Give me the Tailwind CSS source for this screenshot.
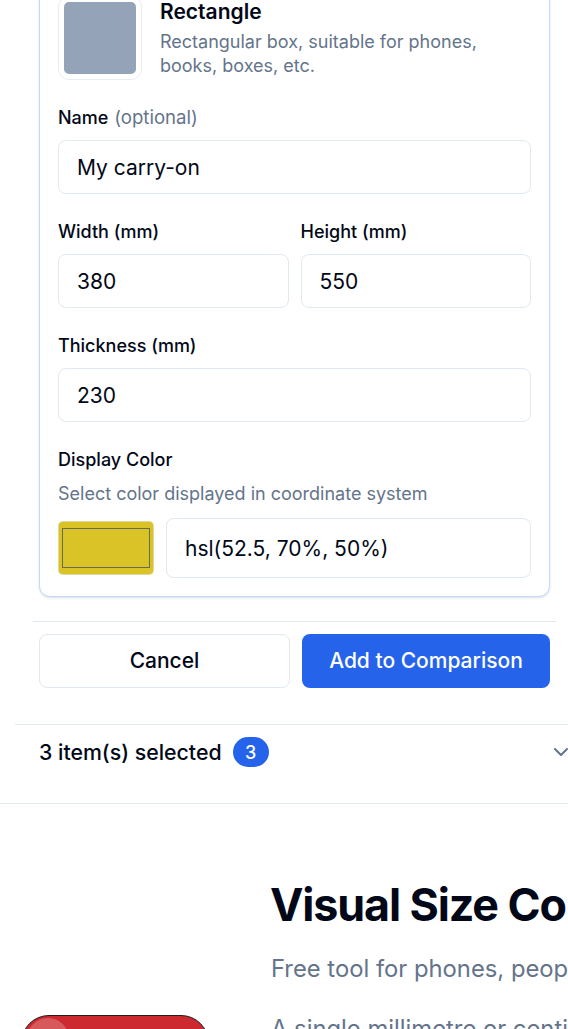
<!DOCTYPE html>
<html>
<head>
<meta charset="utf-8">
<script src="https://cdn.jsdelivr.net/npm/@tailwindcss/browser@4"></script>
</head>
<body class="bg-white">
<div class="w-[568px] h-[1029px] overflow-hidden font-['Inter',sans-serif] text-[#020817] bg-white">
  <div class="ml-[39px] w-[511px] h-[621px] -mt-[24px] pt-[19px] px-[18px] border border-[#bfdbfe] rounded-[11px] shadow-sm bg-white box-border">
    <div class="flex gap-[18px]">
      <div class="w-[84px] h-[84px] shrink-0 border border-[#e9edf2] rounded-[11px] p-[5px]">
        <div class="w-full h-full rounded-[5px] bg-[#94a3b8]"></div>
      </div>
      <div class="pt-[2px]">
        <div class="text-[21px] leading-[28px] font-semibold">Rectangle</div>
        <div class="mt-[4px] text-[18px] leading-[24px] text-[#64748b]">Rectangular box, suitable for phones, books, boxes, etc.</div>
      </div>
    </div>
    <div class="mt-[26px] flex flex-col gap-[10px]">
      <label class="text-[18px] h-[24px] leading-[24px] font-medium">Name <span class="ml-[1px] text-[18.6px] leading-none font-normal text-[#64748b]">(optional)</span></label>
      <input class="w-full h-[54px] px-[18px] border border-[#e2e8f0] rounded-[8px] text-[21px] bg-white" value="My carry-on">
    </div>
    <div class="mt-[26px] grid grid-cols-2 gap-[12px]">
      <div class="flex flex-col gap-[10px]">
        <label class="text-[18px] leading-[24px] font-medium">Width (mm)</label>
        <input class="w-full h-[54px] px-[18px] border border-[#e2e8f0] rounded-[8px] text-[21px] bg-white" value="380">
      </div>
      <div class="flex flex-col gap-[10px]">
        <label class="text-[18px] leading-[24px] font-medium">Height (mm)</label>
        <input class="w-full h-[54px] px-[18px] border border-[#e2e8f0] rounded-[8px] text-[21px] bg-white" value="550">
      </div>
    </div>
    <div class="mt-[26px] flex flex-col gap-[10px]">
      <label class="text-[18px] leading-[24px] font-medium">Thickness (mm)</label>
      <input class="w-full h-[54px] px-[18px] border border-[#e2e8f0] rounded-[8px] text-[21px] bg-white" value="230">
    </div>
    <div class="mt-[26px]">
      <div class="text-[18px] leading-[24px] font-medium">Display Color</div>
      <div class="mt-[10px] text-[18px] leading-[24px] text-[#64748b]">Select color displayed in coordinate system</div>
      <div class="mt-[12px] flex items-center gap-[12px]">
        <div class="w-[96px] h-[54px] shrink-0 rounded-[5px] bg-[#d9c326] border border-[#e2e8f0]/60 px-[3px] pt-[6px]">
          <div class="w-full h-[40px] border border-[#6b6a52]"></div>
        </div>
        <input class="flex-1 min-w-0 h-[60px] px-[18px] border border-[#e2e8f0] rounded-[8px] text-[21px] bg-white" value="hsl(52.5, 70%, 50%)">
      </div>
    </div>
  </div>
  <div class="ml-[33px] w-[523px] h-[24px] box-content border-b border-[#e2e8f0]"></div>
  <div class="ml-[39px] w-[511px] mt-[12px] flex gap-[12px]">
    <button class="w-[251px] shrink-0 h-[54px] border border-[#e2e8f0] rounded-[8px] bg-white text-[21px] font-medium">Cancel</button>
    <button class="flex-1 h-[54px] rounded-[8px] bg-[#2563eb] text-white text-[21px] font-medium">Add to Comparison</button>
  </div>
  <div class="ml-[15px] mt-[36px] h-[79px] border-t border-[#e2e8f0] pl-[24px] pt-[12px] flex justify-between items-start">
    <div class="flex items-center gap-[11px]">
      <span class="text-[21.3px] font-medium leading-[30px]">3 item(s) selected</span>
      <span class="w-[36px] h-[30px] rounded-full bg-[#2563eb] text-white text-[18px] font-medium flex items-center justify-center">3</span>
    </div>
    <svg class="w-[24px] h-[24px] shrink-0 mt-[3px] -mr-[5px] text-[#64748b]" viewBox="0 0 24 24" fill="none" stroke="currentColor" stroke-width="2" stroke-linecap="round" stroke-linejoin="round"><path d="m6 9 6 6 6-6"/></svg>
  </div>
  <div class="border-t border-[#e2e8f0] flex pt-[71px]">
    <div class="w-[271px] shrink-0 pl-[21px] pt-[140px]">
      <div class="w-[188px] h-[100px] rounded-[28px] border-[1.5px] border-[#1f1f1f] bg-[#cc2a30] overflow-hidden">
        <div class="ml-[5px] mt-[2px] w-[42px] h-[42px] rounded-full bg-[#d8595c]"></div>
      </div>
    </div>
    <div class="whitespace-nowrap -ml-[1px]">
      <div class="text-[44.8px] leading-[60px] font-bold tracking-tight">Visual Size Comparison</div>
      <div class="mt-[17px] ml-[1px] text-[23.8px] leading-[34px] text-[#64748b]">Free tool for phones, people</div>
      <div class="mt-[26px] ml-[1px] text-[23.8px] leading-[34px] text-[#64748b]">A single millimetre or centimetre</div>
    </div>
  </div>
</div>
</body>
</html>
